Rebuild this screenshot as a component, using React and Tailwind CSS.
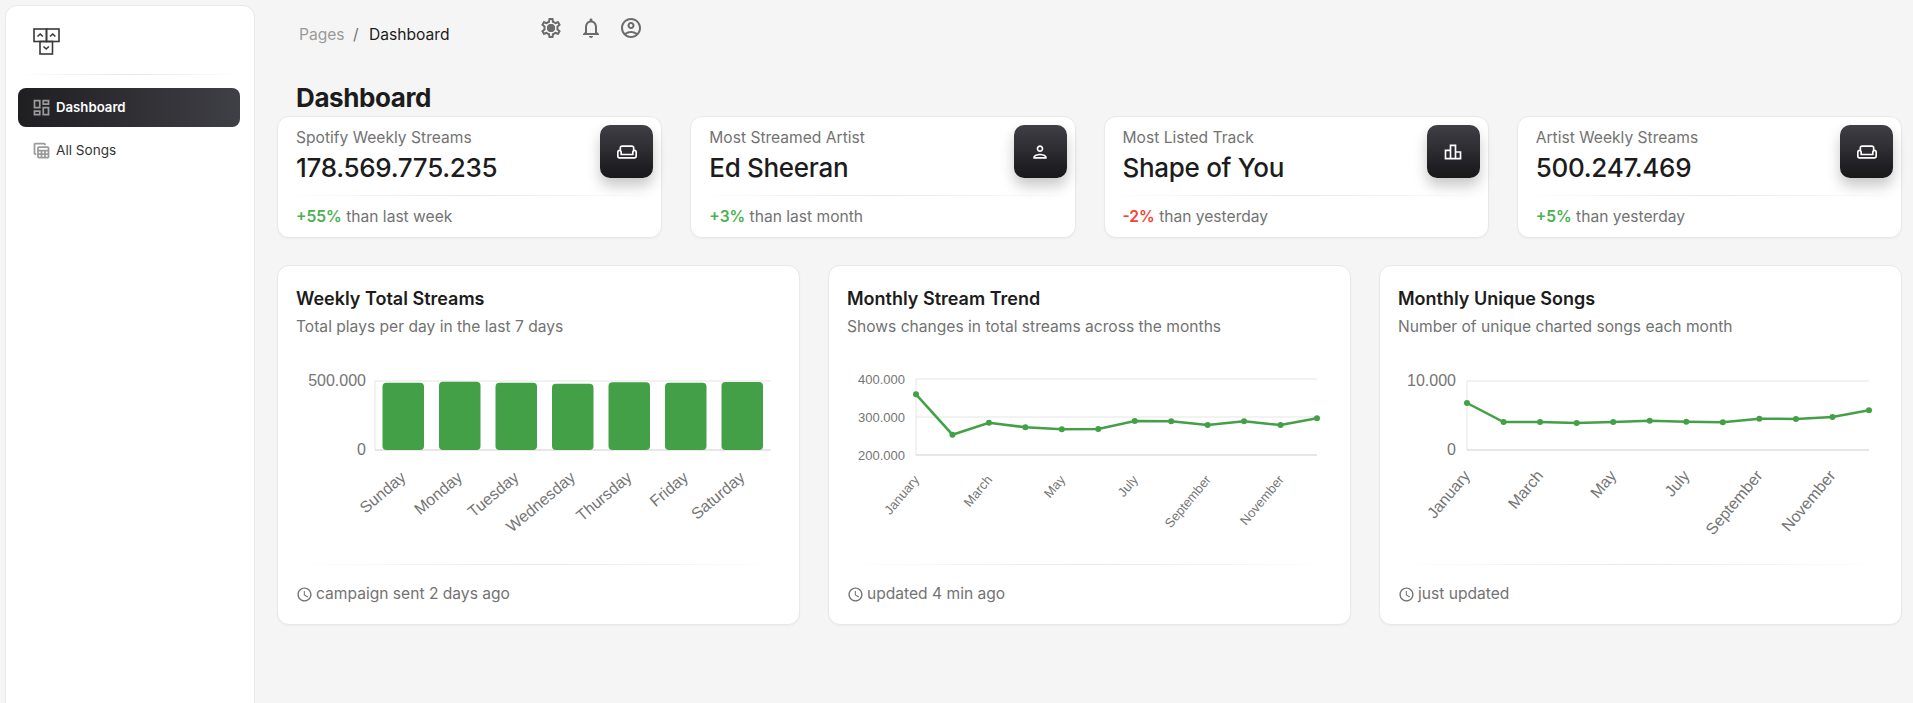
import {
  MdOutlineWeekend, MdOutlinePerson, MdOutlineLeaderboard, MdOutlineSettings, MdOutlineNotifications,
  MdOutlineAccountCircle, MdOutlineDashboard, MdOutlineTableView, MdOutlineAccessTime,
} from 'react-icons/md';

const STATS = [
  { label: 'Spotify Weekly Streams', value: '178.569.775.235', change: '+55%', up: true, note: 'than last week', Icon: MdOutlineWeekend },
  { label: 'Most Streamed Artist', value: 'Ed Sheeran', change: '+3%', up: true, note: 'than last month', Icon: MdOutlinePerson },
  { label: 'Most Listed Track', value: 'Shape of You', change: '-2%', up: false, note: 'than yesterday', Icon: MdOutlineLeaderboard },
  { label: 'Artist Weekly Streams', value: '500.247.469', change: '+5%', up: true, note: 'than yesterday', Icon: MdOutlineWeekend },
];

const DAYS = ['Sunday', 'Monday', 'Tuesday', 'Wednesday', 'Thursday', 'Friday', 'Saturday'];
const BAR_TOPS = [34.7, 33.7, 34.7, 35.7, 34.3, 34.7, 34];
const MONTHS = ['January', 'March', 'May', 'July', 'September', 'November'];
const TREND_Y = [46.3, 86.7, 74.7, 79.3, 81.3, 81, 73, 73.3, 77, 73.3, 77, 70.3];
const UNIQUE_Y = [55, 74, 74, 75, 74, 72.7, 73.7, 74.3, 70.7, 71, 69, 62.3];

function Divider({ className }) {
  return <div className={`h-px bg-gradient-to-r from-transparent via-gray-200 to-transparent ${className}`} />;
}

function Logo() {
  return (
    <svg width="28" height="28" viewBox="0 0 28 28" fill="none" stroke="#3a3a3a" strokeWidth="1.6">
      <rect x="1" y="1" width="12.5" height="12.5" />
      <rect x="13.5" y="1" width="12.5" height="12.5" />
      <rect x="7" y="13.5" width="12.5" height="12.5" />
      <path d="M4.5 8.5 7.2 6l2.7 2.5M17 8.5 19.7 6l2.7 2.5M10.5 18.5l2.7 2.5 2.7-2.5" />
    </svg>
  );
}

function StatCard({ stat }) {
  const { label, value, change, up, note, Icon } = stat;
  return (
    <div className="relative h-[122px] bg-white rounded-xl border border-[#e8e8e8] shadow-[0_1px_2px_rgba(0,0,0,0.04)]">
      <div className="px-[18px] pt-[10px] h-[78px]">
        <p className="text-[15.6px] leading-[22px] text-[#737373]">{label}</p>
        <p className="text-[26px] leading-[38px] font-medium text-[#1c1c1c] tracking-[-0.3px]">{value}</p>
      </div>
      <div className="absolute right-[8px] top-[8px] w-[53px] h-[53px] rounded-[10px] bg-gradient-to-b from-[#3f3f46] to-[#18181b] shadow-[0_8px_14px_rgba(0,0,0,0.22)] flex items-center justify-center">
        <Icon className="text-white" size={20} />
      </div>
      <Divider className="mx-[4px]" />
      <p className="px-[18px] pt-[11px] text-[15.6px] leading-[20px] text-[#737373]">
        <span className={`font-semibold ${up ? 'text-[#4caf50]' : 'text-[#f44335]'}`}>{change}</span> {note}
      </p>
    </div>
  );
}

function ChartCard({ title, subtitle, footer, children }) {
  return (
    <div className="h-[360px] bg-white rounded-xl border border-[#e8e8e8] shadow-[0_1px_2px_rgba(0,0,0,0.04)] px-[18px] pt-[21px]">
      <h3 className="text-[18px] leading-[24px] font-semibold text-[#1c1c1c]">{title}</h3>
      <p className="mt-[5px] text-[15.6px] leading-[22px] text-[#737373]">{subtitle}</p>
      <div className="mt-[10px] h-[200px]">{children}</div>
      <Divider className="mt-[16px]" />
      <div className="mt-[19px] flex items-center gap-[3px] text-[15.6px] leading-[20px] text-[#737373]">
        <MdOutlineAccessTime size={17} />
        <span>{footer}</span>
      </div>
    </div>
  );
}

// chart coordinates are relative to the svg, 485 wide and 200 high
function BarChart() {
  const x0 = 79, w = 56.5, top = 33, bottom = 102;
  return (
    <svg width="485" height="200" className="block font-['Liberation_Sans',sans-serif]">
      <line x1={x0} x2={475} y1={top} y2={top} stroke="#e5e5e5" />
      <line x1={x0} x2={x0} y1={top} y2={bottom} stroke="#e5e5e5" />
      <line x1={x0} x2={475} y1={bottom} y2={bottom} stroke="#cfcfcf" />
      <text x="70" y={top + 5} textAnchor="end" fontSize="16" fill="#757575">500.000</text>
      <text x="70" y={bottom + 5} textAnchor="end" fontSize="16" fill="#757575">0</text>
      {DAYS.map((d, i) => (
        <g key={d}>
          <rect x={x0 + i * w + 7.5} y={BAR_TOPS[i]} width="41.5" height={bottom - BAR_TOPS[i]} rx="4" fill="#43a047" />
          <text transform={`translate(${x0 + i * w + 32} ${bottom + 29}) rotate(-40)`} textAnchor="end" fontSize="16" fill="#757575">{d}</text>
        </g>
      ))}
    </svg>
  );
}

function LineChart({ x0, x1, top, bottom, mid, points, ticks, tickSize, labelSize, labelDy }) {
  const step = (x1 - x0) / 11;
  const coords = points.map((y, i) => [x0 + i * step, y]);
  return (
    <svg width="485" height="200" className="block font-['Liberation_Sans',sans-serif]">
      <line x1={x0} x2={x1} y1={top} y2={top} stroke="#e5e5e5" />
      {mid && <line x1={x0} x2={x1} y1={mid} y2={mid} stroke="#e5e5e5" />}
      <line x1={x0} x2={x0} y1={top} y2={bottom} stroke="#e5e5e5" />
      <line x1={x0} x2={x1} y1={bottom} y2={bottom} stroke="#cfcfcf" />
      {ticks.map(([label, y]) => (
        <text key={label} x={x0 - 11} y={y + 5} textAnchor="end" fontSize={tickSize} fill="#757575">{label}</text>
      ))}
      <polyline points={coords.map((c) => c.join(',')).join(' ')} fill="none" stroke="#43a047" strokeWidth="2.5" />
      {coords.map(([x, y]) => <circle key={x} cx={x} cy={y} r="3" fill="#43a047" />)}
      {MONTHS.map((m, i) => (
        <text key={m} transform={`translate(${x0 + i * 2 * step + 4} ${bottom + labelDy}) rotate(-50)`} textAnchor="end" fontSize={labelSize} fill="#757575">{m}</text>
      ))}
    </svg>
  );
}

export default function App() {
  return (
    <div className="h-screen overflow-hidden bg-[#f5f5f5] flex font-['Inter',sans-serif]">
      <aside className="shrink-0 ml-[5px] mt-[5px] w-[250px] h-[760px] bg-white rounded-xl border border-[#e8e8e8]">
        <div className="pl-[27px] pt-[22px] h-[68px]"><Logo /></div>
        <Divider className="mx-[12px]" />
        <nav className="pl-[12px] pr-[14px] pt-[13px]">
          <div className="h-[39px] rounded-lg bg-gradient-to-r from-[#1f1f22] to-[#3f3f46] flex items-center gap-[4px] pl-[13px] text-[13.2px] font-semibold text-white">
            <MdOutlineDashboard size={21} className="text-[#9a9a9a]" />
            Dashboard
          </div>
          <div className="mt-[4px] h-[39px] flex items-center gap-[4px] pl-[13px] text-[13.6px] text-[#333]">
            <MdOutlineTableView size={21} className="text-[#9a9a9a]" />
            All Songs
          </div>
        </nav>
      </aside>

      <main className="flex-1 min-w-0 pl-[22px] pr-[11px]">
        <header className="h-[81px] pl-[22px] pt-[16px] flex items-start">
          <div className="w-[240px] pt-[9px] text-[15.6px] leading-[20px] text-[#9a9a9a]">
            Pages <span className="ml-[4px] mr-[6px] text-[#737373]">/</span> <span className="text-[#1c1c1c]">Dashboard</span>
          </div>
          <div className="flex items-center gap-[16px] text-[#6b6b6b]">
            <div className="relative">
              <MdOutlineSettings size={24} />
              <span className="absolute left-[8px] top-[8px] w-[8px] h-[8px] rounded-full bg-[#6b6b6b]" />
            </div>
            <MdOutlineNotifications size={24} />
            <MdOutlineAccountCircle size={24} />
          </div>
        </header>
        <h1 className="pl-[19px] h-[35px] text-[26px] leading-[33px] font-bold text-[#1c1c1c] tracking-[-0.4px]">Dashboard</h1>

        <div className="grid grid-cols-4 gap-[28px]">
          {STATS.map((s) => <StatCard key={s.label} stat={s} />)}
        </div>

        <div className="mt-[27px] grid grid-cols-3 gap-[28px]">
          <ChartCard title="Weekly Total Streams" subtitle="Total plays per day in the last 7 days" footer="campaign sent 2 days ago">
            <BarChart />
          </ChartCard>
          <ChartCard title="Monthly Stream Trend" subtitle="Shows changes in total streams across the months" footer="updated 4 min ago">
            <LineChart x0={69} x1={470} top={31} mid={69} bottom={107} points={TREND_Y} tickSize={13}
              ticks={[['400.000', 31], ['300.000', 69], ['200.000', 107]]} labelSize={13} labelDy={25} />
          </ChartCard>
          <ChartCard title="Monthly Unique Songs" subtitle="Number of unique charted songs each month" footer="just updated">
            <LineChart x0={69} x1={471} top={33} bottom={102} points={UNIQUE_Y} tickSize={16}
              ticks={[['10.000', 33], ['0', 102]]} labelSize={16} labelDy={26} />
          </ChartCard>
        </div>
      </main>
    </div>
  );
}
